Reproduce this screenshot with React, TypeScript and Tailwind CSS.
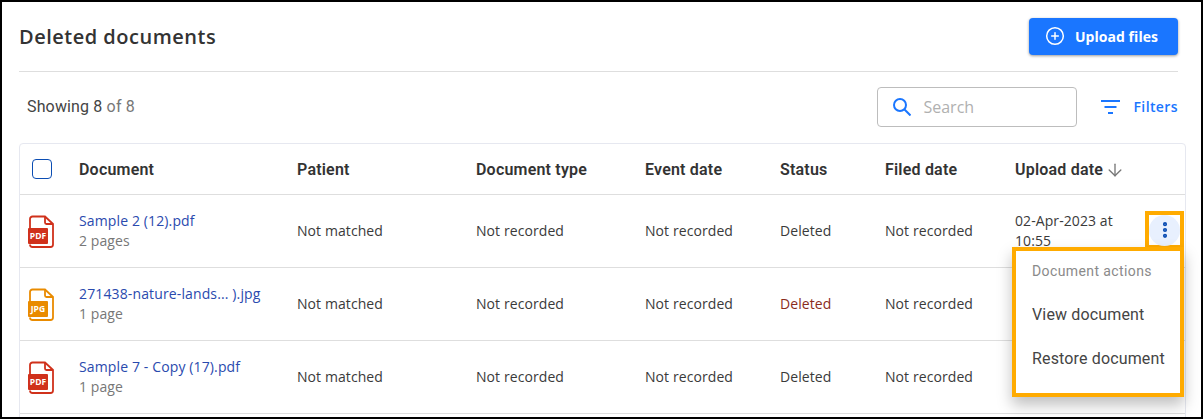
import { MoreVertical, ArrowDown, PlusCircle } from 'lucide-react';

const rows = [
  { name: 'Sample 2 (12).pdf', pages: '2 pages', kind: 'PDF', upload: '02-Apr-2023 at 10:55' },
  { name: '271438-nature-lands... ).jpg', pages: '1 page', kind: 'JPG', upload: '' },
  { name: 'Sample 7 - Copy (17).pdf', pages: '1 page', kind: 'PDF', upload: '' },
];

const gridCols = 'grid grid-cols-[59px_218px_179px_169px_135px_105px_130px_1fr] items-center';

function FileIcon({ kind }: { kind: string }) {
  const color = kind === 'PDF' ? '#d0311b' : '#e98b00';
  return (
    <svg width="26" height="33" viewBox="0 0 26 33" fill="none">
      <path
        d="M2 13V4a2.500 2.500 0 0 1 2.500-2.500H17L25 9v20.500a2.500 2.500 0 0 1-2.500 2.500H4.500A2.500 2.500 0 0 1 2 29.500"
        stroke={color}
        strokeWidth="1.800"
      />
      <path d="M17 2v5.500a1.500 1.500 0 0 0 1.500 1.500H25" stroke={color} strokeWidth="1.800" />
      <rect x="0" y="13" width="20" height="16" rx="1" fill={color} />
      <text x="10" y="24" textAnchor="middle" fill="#fff" fontSize="8.500" fontWeight="700" fontFamily="'Open Sans', sans-serif">
        {kind}
      </text>
    </svg>
  );
}

export default function App() {
  return (
    <div className="relative h-[419px] w-[1203px] overflow-hidden border-2 border-black bg-white font-['Open_Sans',sans-serif] text-[#333]">
      <div className="ml-[17px] mr-[23px] flex h-[70px] items-center justify-between border-b border-[#dedede] pb-[1px]">
        <h1 className="pt-[2px] text-[20px] font-semibold tracking-[0.5px] text-[#333]">Deleted documents</h1>
        <button className="flex h-[37px] w-[149px] items-center justify-center gap-[10px] rounded bg-[#1a76ff] pr-[4px] text-[14px] font-bold tracking-[0.05px] text-white shadow-[0_1px_3px_rgba(0,0,0,0.4)]">
          <PlusCircle size={20} strokeWidth={1.8} />
          Upload files
        </button>
      </div>

      <div className="ml-[25px] mr-[23px] mt-[15px] flex h-[40px] items-center">
        <p className="font-['Roboto',sans-serif] text-[16px] tracking-[0.15px] text-[#444]">
          Showing 8 <span className="text-[#777]">of 8</span>
        </p>
        <div className="ml-auto flex h-[40px] w-[200px] items-center gap-[12px] rounded border border-[#bdbdbd] pl-[15px]">
          <svg width="18" height="18" viewBox="0 0 18 18" fill="none" stroke="#1a76ff" strokeWidth="2">
            <circle cx="7" cy="7" r="6" />
            <path d="M11.500 11.500L17.500 17.500" />
          </svg>
          <span className="text-[16px] text-[#b0b0b0]">Search</span>
        </div>
        <div className="ml-[24px] flex items-center gap-[13px] pb-[1px] text-[14px] font-semibold tracking-[0.4px] text-[#1a76ff]">
          <svg width="19" height="14" viewBox="0 0 19 14" fill="#1a76ff">
            <rect x="0" y="0" width="19" height="2" />
            <rect x="3.500" y="6" width="12" height="2" />
            <rect x="7" y="12" width="5" height="2" />
          </svg>
          Filters
        </div>
      </div>

      <div className="ml-[17px] mr-[15px] mt-[16px] rounded-t border border-[#e6e8f0] pb-[40px]">
        <div className={`${gridCols} h-[51px] border-b border-[#dedede] pt-[1px] font-['Roboto',sans-serif] text-[16px] font-semibold tracking-[0.2px] text-[#333]`}>
          <div className="pl-[12px]">
            <div className="mb-[1px] h-[20px] w-[20px] rounded-[4px] border-[1.5px] border-[#0b4db3]" />
          </div>
          <div>Document</div>
          <div>Patient</div>
          <div>Document type</div>
          <div>Event date</div>
          <div>Status</div>
          <div>Filed date</div>
          <div className="flex items-center gap-[2px]">
            Upload date <ArrowDown size={20} strokeWidth={1.600} className="text-[#777]" />
          </div>
        </div>
        {rows.map((row) => (
          <div key={row.name} className={`${gridCols} h-[73px] border-b border-[#dedede] text-[14px] tracking-[0.08px] text-[#3a3a3a]`}>
            <div className="pl-[8px]">
              <FileIcon kind={row.kind} />
            </div>
            <div>
              <div className="leading-[20px] tracking-[0.13px] text-[#2a4aae]">{row.name}</div>
              <div className="leading-[20px] text-[#777]">{row.pages}</div>
            </div>
            <div className="pb-[2px]">Not matched</div>
            <div className="pb-[2px]">Not recorded</div>
            <div className="pb-[2px]">Not recorded</div>
            <div className={row.kind === 'JPG' ? 'pb-[2px] text-[#8a2c1c]' : 'pb-[2px]'}>Deleted</div>
            <div className="pb-[2px]">Not recorded</div>
            <div className="w-[110px] leading-[20px]">{row.upload}</div>
          </div>
        ))}
      </div>

      <div className="absolute left-[1143px] top-[209px] flex h-[38px] w-[39px] items-center justify-center border-4 border-[#ffab00]">
        <div className="flex h-[31px] w-[31px] items-center justify-center rounded-full bg-[#e8f0fe]">
          <MoreVertical size={20} strokeWidth={3} className="text-[#0b4db3]" />
        </div>
      </div>

      <div className="absolute left-[1010px] top-[245px] h-[150px] w-[172px] border-4 border-[#ffab00] bg-white pl-[16px] font-['Roboto',sans-serif] text-[#444] shadow-[0_8px_14px_rgba(0,0,0,0.25)]">
        <div className="pt-[10px] text-[14px] leading-[20px] tracking-[0.4px] text-[#8a8a8a]">Document actions</div>
        <div className="pt-[24px] text-[16px] leading-[20px] tracking-[0.15px]">View document</div>
        <div className="pt-[24px] text-[16px] leading-[20px] tracking-[0.15px]">Restore document</div>
      </div>
    </div>
  );
}
